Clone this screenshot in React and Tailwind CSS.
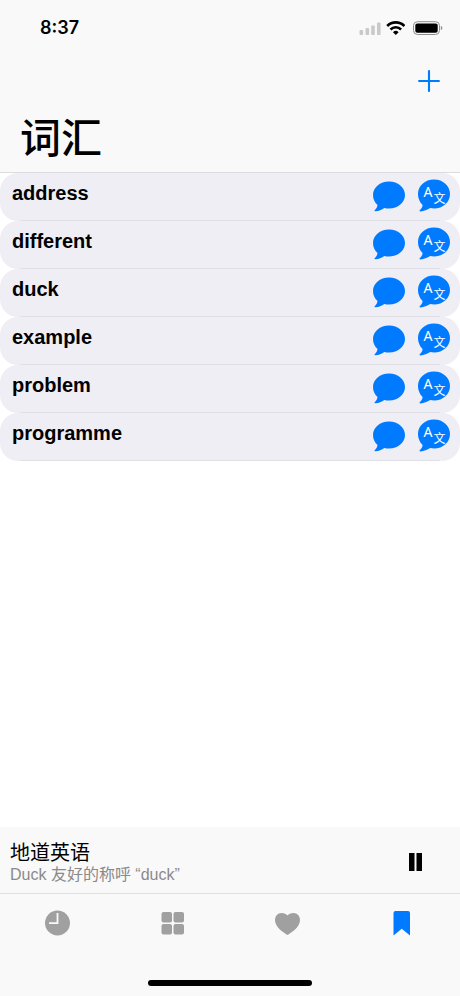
import { Plus } from 'lucide-react';

const words = ['address', 'different', 'duck', 'example', 'problem', 'programme'];

const StatusBar = () => (
  <div className="flex h-14 items-center justify-between pl-10 pr-4">
    <span className="font-['Inter'] text-lg font-semibold">8:37</span>
    <div className="flex items-center gap-1">
      <svg width="24" height="16" viewBox="0 0 24 16" fill="#c9c9c9">
        <rect x="2.500" y="10" width="3.600" height="5" rx="1" />
        <rect x="8.500" y="8" width="3.600" height="7" rx="1" />
        <rect x="14.200" y="5.500" width="3.600" height="9.500" rx="1" />
        <rect x="20" y="2.500" width="3.600" height="12.500" rx="1" />
      </svg>
      <svg width="20" height="16" viewBox="0 0 20 16" fill="none" stroke="#000" strokeWidth="2.600">
        <path d="M2.200 6a12 12 0 0 1 17.200 0" />
        <path d="M5.500 9.500a7.500 7.500 0 0 1 10.600 0" />
        <path d="M10.800 15 8 12.200a4 4 0 0 1 5.600 0z" fill="#000" stroke="none" />
      </svg>
      <svg className="ml-1" width="31" height="16" viewBox="0 0 31 16">
        <rect x="0.500" y="1.700" width="26" height="12.800" rx="4" fill="none" stroke="#8e8e8e" />
        <rect x="2.300" y="3.500" width="22.400" height="9.200" rx="2" />
        <path d="M27.800 6v4c2-.6 2-3.400 0-4z" fill="#8e8e8e" />
      </svg>
    </div>
  </div>
);

const BubbleIcon = () => (
  <svg width="34" height="32" viewBox="0 0 34 32" fill="#007aff">
    <path d="M17 .5c9 0 16 6 16 13.500s-7 13.500-16 13.500c-1.600 0-3.200-.2-4.700-.6-2.500 1.900-5.500 3.300-9 3.400-.8 0-1-.8-.4-1.400 1.700-1.700 2.500-3.300 2.600-5C2.700 21.500 1 18 1 14 1 6.500 8 .5 17 .5z" />
  </svg>
);

const TranslateIcon = () => (
  <svg width="34" height="34" viewBox="0 0 34 34" fill="#007aff">
    <path d="M17 .5c9 0 16 6.300 16 14.500s-7 14.500-16 14.500c-1.300 0-2.600-.1-3.800-.4-2.900 2-6.200 3.200-9.800 3.300-.9 0-1.100-.9-.5-1.500 1.900-1.800 2.600-3.200 2.700-5C2.700 23.200 1 19.300 1 15 1 6.800 8 .5 17 .5z" />
    <text x="6.500" y="17.500" fontSize="14" fill="#fff" className="font-['Noto_Sans']">A</text>
    <text x="16.500" y="23.500" fontSize="12" fill="#fff" className="font-['Noto_Sans_CJK_SC']">文</text>
  </svg>
);

const WordRow = ({ word }) => (
  <li className="relative flex h-12 rounded-[18px] bg-[#efeef5] pr-[9px] pl-3">
    <span className="flex-1 pt-1.5 text-xl leading-7 font-bold">{word}</span>
    <div className="flex items-start gap-[11px] pt-2">
      <button aria-label={`Speak ${word}`}>
        <BubbleIcon />
      </button>
      <button aria-label={`Translate ${word}`} className="-mt-0.5">
        <TranslateIcon />
      </button>
    </div>
    <div className="absolute right-5 bottom-0 left-5 h-px bg-[#e0dfe6]" />
  </li>
);

const MiniPlayer = () => (
  <div className="flex items-center justify-between border-b border-[#dfdfdf] pt-3.5 pr-8 pb-2 pl-2.5">
    <div>
      <p className="text-xl leading-6">地道英语</p>
      <p className="text-base leading-5 text-[#8a8a8a]">Duck 友好的称呼 “duck”</p>
    </div>
    <button aria-label="Pause" className="px-1">
      <svg width="18" height="20" viewBox="0 0 18 20">
        <rect x="3" y="0" width="5.500" height="18" />
        <rect x="10.500" y="0" width="5.500" height="18" />
      </svg>
    </button>
  </div>
);

const TabBar = () => (
  <nav className="grid grid-cols-4 justify-items-center pt-4 text-[#a0a0a0]">
    <button aria-label="Recent">
      <svg width="26" height="26" viewBox="0 0 26 26">
        <circle cx="12.500" cy="13" r="12.500" fill="currentColor" />
        <path d="M12.500 3v10.200H4" fill="none" stroke="#f9f9f9" strokeWidth="1.800" />
      </svg>
    </button>
    <button aria-label="Categories">
      <svg width="26" height="26" viewBox="0 0 26 26" fill="currentColor">
        <rect x="1.500" y="2" width="10.500" height="10.500" rx="2" />
        <rect x="13.500" y="2" width="10.500" height="10.500" rx="2" />
        <rect x="1.500" y="14" width="10.500" height="10.500" rx="2" />
        <rect x="13.500" y="14" width="10.500" height="10.500" rx="2" />
      </svg>
    </button>
    <button aria-label="Favourites">
      <svg width="26" height="26" viewBox="0 0 26 26" fill="currentColor">
        <path d="M12.500 25C7.500 21.800 0 17 0 10 0 6 2.700 3 6.500 3c2.700 0 4.800 1 6 2.500C13.700 4 15.800 3 18.500 3 22.300 3 25 6 25 10c0 7-7.500 11.800-12.500 15z" />
      </svg>
    </button>
    <button aria-label="Bookmarks" className="text-[#007aff]">
      <svg width="26" height="26" viewBox="0 0 26 26" fill="currentColor">
        <path d="M5.500 1h12.500a2 2 0 0 1 2 2v22.500l-8.200-6.800-8.300 6.800V3a2 2 0 0 1 2-2z" />
      </svg>
    </button>
  </nav>
);

export default function App() {
  return (
    <div className="flex min-h-screen flex-col bg-white font-['Liberation_Sans','Noto_Sans_CJK_SC',sans-serif] text-black">
      <header className="border-b border-[#dcdcdf] bg-[#f9f9f9]">
        <StatusBar />
        <div className="flex justify-end px-3.5 pt-2">
          <button aria-label="Add word" className="text-[#007aff]">
            <Plus size={34} strokeWidth={1.5} />
          </button>
        </div>
        <h1 className="px-5 pt-3 pb-1 text-[41px] leading-[58px] font-medium">词汇</h1>
      </header>

      <main className="flex-1">
        <ul>
          {words.map((word) => (
            <WordRow key={word} word={word} />
          ))}
        </ul>
      </main>

      <footer className="bg-[#f9f9f9]">
        <MiniPlayer />
        <TabBar />
        {/* Home indicator */}
        <div className="mx-auto mt-11 mb-2.5 h-1.5 w-[164px] rounded-full bg-black" />
      </footer>
    </div>
  );
}
